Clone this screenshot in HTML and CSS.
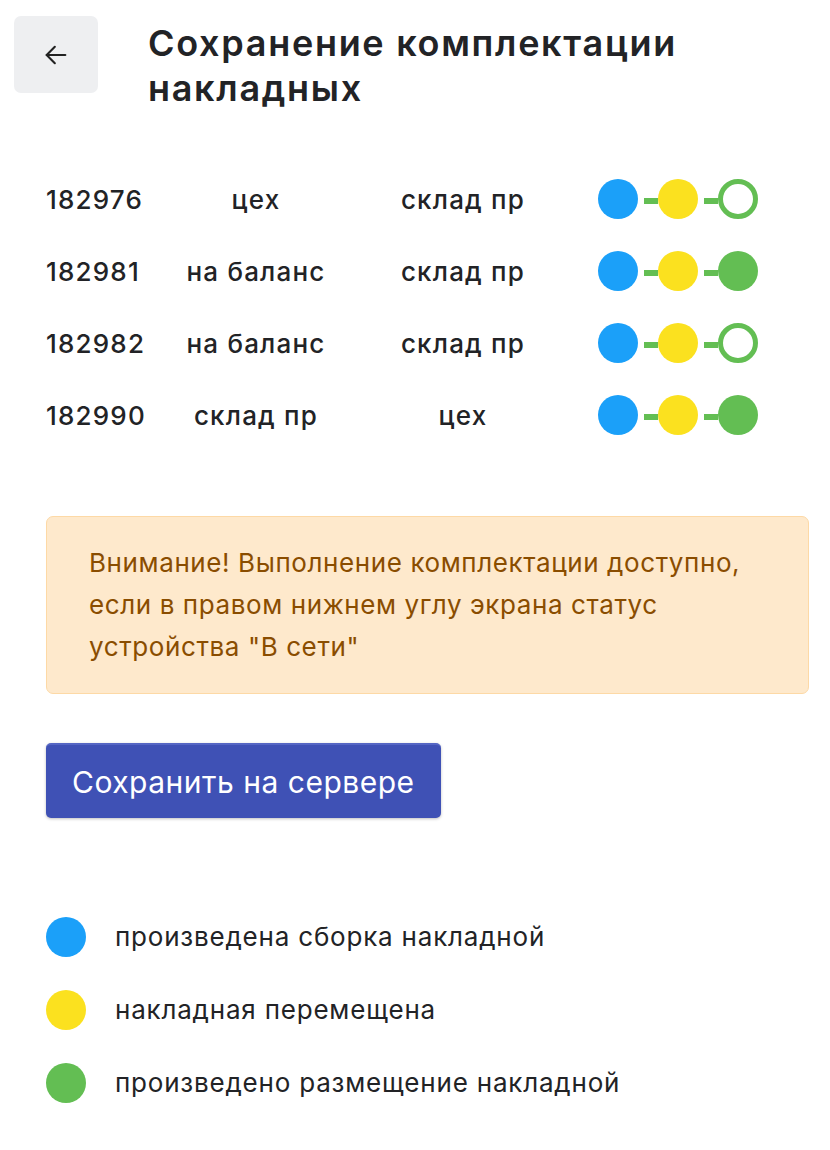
FILE: index.html
```html
<!DOCTYPE html>
<html lang="ru">

<head>
    <meta charset="UTF-8">
    <meta name="viewport" content="width=device-width, initial-scale=1.0">
    <title>Сохранение комплектации накладных</title>
    <link rel="stylesheet" href="styles.css">
</head>

<body>
    <!-- Header -->
    <div class="header">
        <button class="back" aria-label="Назад">
            <svg width="28" height="28" viewBox="0 0 24 24" fill="none" stroke="#222" stroke-width="1.8" stroke-linecap="round" stroke-linejoin="round">
                <path d="M20 12H4"></path>
                <path d="M11 19l-7-7 7-7"></path>
            </svg>
        </button>
        <h1 class="title">Сохранение комплектации накладных</h1>
    </div>

    <!-- Invoices -->
    <div class="invoices">
        <div class="invoice">
            <div class="num">182976</div>
            <div class="place">цех</div>
            <div class="place">склад пр</div>
            <div class="steps">
                <span class="dot blue"></span>
                <span class="link"></span>
                <span class="dot yellow"></span>
                <span class="link"></span>
                <span class="dot ring"></span>
            </div>
        </div>
        <div class="invoice">
            <div class="num">182981</div>
            <div class="place">на баланс</div>
            <div class="place">склад пр</div>
            <div class="steps">
                <span class="dot blue"></span>
                <span class="link"></span>
                <span class="dot yellow"></span>
                <span class="link"></span>
                <span class="dot green"></span>
            </div>
        </div>
        <div class="invoice">
            <div class="num">182982</div>
            <div class="place">на баланс</div>
            <div class="place">склад пр</div>
            <div class="steps">
                <span class="dot blue"></span>
                <span class="link"></span>
                <span class="dot yellow"></span>
                <span class="link"></span>
                <span class="dot ring"></span>
            </div>
        </div>
        <div class="invoice">
            <div class="num">182990</div>
            <div class="place">склад пр</div>
            <div class="place">цех</div>
            <div class="steps">
                <span class="dot blue"></span>
                <span class="link"></span>
                <span class="dot yellow"></span>
                <span class="link"></span>
                <span class="dot green"></span>
            </div>
        </div>
    </div>

    <div class="alert">
        Внимание! Выполнение комплектации доступно, если в правом нижнем углу экрана статус устройства "В сети"
    </div>

    <button class="save">Сохранить на сервере</button>

    <!-- Legend -->
    <div class="legend">
        <div class="legend-item">
            <span class="dot blue"></span>
            произведена сборка накладной
        </div>
        <div class="legend-item">
            <span class="dot yellow"></span>
            накладная перемещена
        </div>
        <div class="legend-item">
            <span class="dot green"></span>
            произведено размещение накладной
        </div>
    </div>
</body>

</html>
```

FILE: styles.css
```css
body {
    margin: 0;
    padding: 16px 21px 40px 46px;
    font-family: Inter, "Noto Sans", sans-serif;
    color: #222326;
    background-color: white;
}

.header {
    display: flex;
    align-items: flex-start;
    margin-left: -32px;
}

.back {
    width: 84px;
    height: 77px;
    flex-shrink: 0;
    border: none;
    border-radius: 7px;
    background-color: #eeeff1;
    display: flex;
    align-items: center;
    justify-content: center;
    cursor: pointer;
}

.title {
    margin: 5px 0 0 50px;
    font-size: 36px;
    font-weight: 600;
    line-height: 45px;
    letter-spacing: 1.7px;
    max-width: 600px;
}

.invoices {
    margin-top: 52px;
}

.invoice {
    display: grid;
    grid-template-columns: 100px 220px 194px auto;
    align-items: center;
    height: 72px;
    font-size: 26px;
    font-weight: 500;
    letter-spacing: 1.2px;
}

.place {
    text-align: center;
}

.steps {
    display: flex;
    align-items: flex-start;
    margin-left: 38px;
}

.dot {
    display: inline-block;
    width: 40px;
    height: 40px;
    border-radius: 50%;
    box-sizing: border-box;
    flex-shrink: 0;
}

/* green link between steps */
.link {
    width: 14px;
    height: 6px;
    margin: 19px 0 0 6px;
    background-color: #63be53;
}

.blue {
    background-color: #1ba0f9;
}

.yellow {
    background-color: #fbe11f;
}

.green {
    background-color: #63be53;
}

.ring {
    border: 5px solid #63be53;
    background-color: white;
}

.alert {
    margin-top: 65px;
    padding: 25px 42px;
    background-color: #fee9cc;
    border: 1px solid #fdd9a6;
    border-radius: 7px;
    color: #8a4d00;
    font-size: 26px;
    line-height: 42px;
    letter-spacing: 0.6px;
}

.save {
    margin-top: 49px;
    height: 75px;
    padding: 0 26px;
    border: none;
    border-top: 2px solid #5566c4;
    border-radius: 5px;
    background-color: #3f51b5;
    color: white;
    font-family: Inter, "Noto Sans", sans-serif;
    font-size: 30px;
    letter-spacing: 0.5px;
    box-shadow: 0 1px 3px rgba(0, 0, 0, 0.25);
    cursor: pointer;
}

.legend {
    margin-top: 82px;
}

.legend-item {
    display: flex;
    align-items: center;
    gap: 29px;
    height: 73px;
    font-size: 26px;
    letter-spacing: 0.8px;
}
```
